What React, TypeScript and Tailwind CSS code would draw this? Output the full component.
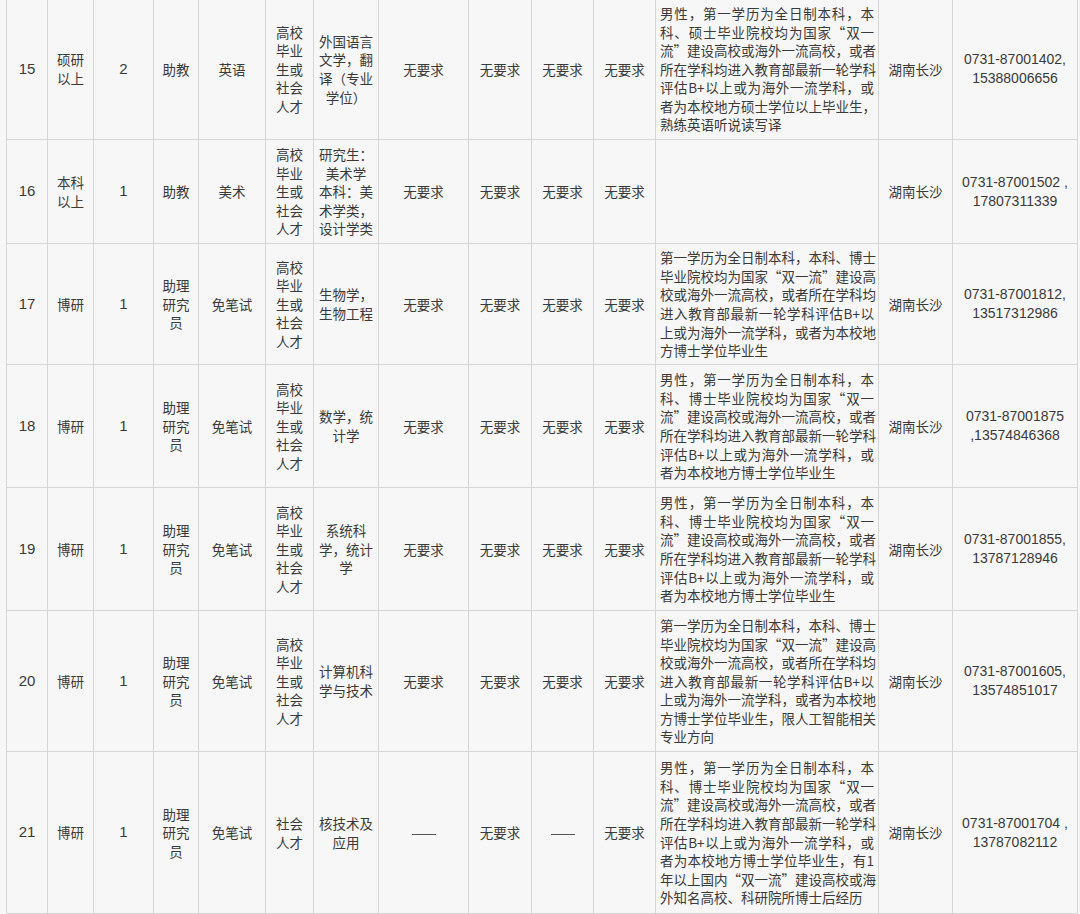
import React from 'react';

const cjk = '[font-family:"Noto_Sans_CJK_SC",sans-serif]';
const latin = '[font-family:"Liberation_Sans","Noto_Sans_CJK_SC",sans-serif]';
const td = 'border border-[#d6d6d6] p-0 text-center align-middle';

type Row = {
  no: string;
  edu: string[];
  count: string;
  post: string[];
  exam: string[];
  source: string[];
  major: string[];
  reqs: string[];
  desc: string[];
  phone: string[];
  h: string;
};

const descMale = [
  '男性，第一学历为全日制本科，本',
  '科、博士毕业院校均为国家“双一',
  '流”建设高校或海外一流高校，或者',
  '所在学科均进入教育部最新一轮学科',
  '评估B+以上或为海外一流学科，或',
  '者为本校地方博士学位毕业生',
];

const descPlain = [
  '第一学历为全日制本科，本科、博士',
  '毕业院校均为国家“双一流”建设高',
  '校或海外一流高校，或者所在学科均',
  '进入教育部最新一轮学科评估B+以',
  '上或为海外一流学科，或者为本校地',
];

const source = ['高校', '毕业', '生或', '社会', '人才'];
const none4 = ['无要求', '无要求', '无要求', '无要求'];
const assistant = ['助理', '研究', '员'];

const rows: Row[] = [
  {
    no: '15',
    edu: ['硕研', '以上'],
    count: '2',
    post: ['助教'],
    exam: ['英语'],
    source,
    major: ['外国语言', '文学，翻', '译（专业', '学位）'],
    reqs: none4,
    desc: [
      '男性，第一学历为全日制本科，本',
      '科、硕士毕业院校均为国家“双一',
      '流”建设高校或海外一流高校，或者',
      '所在学科均进入教育部最新一轮学科',
      '评估B+以上或为海外一流学科，或',
      '者为本校地方硕士学位以上毕业生，',
      '熟练英语听说读写译',
    ],
    phone: ['0731-87001402,', '15388006656'],
    h: 'h-[141px]',
  },
  {
    no: '16',
    edu: ['本科', '以上'],
    count: '1',
    post: ['助教'],
    exam: ['美术'],
    source,
    major: ['研究生：', '美术学', '本科：美', '术学类，', '设计学类'],
    reqs: none4,
    desc: [],
    phone: ['0731-87001502 ,', '17807311339'],
    h: 'h-[104px]',
  },
  {
    no: '17',
    edu: ['博研'],
    count: '1',
    post: assistant,
    exam: ['免笔试'],
    source,
    major: ['生物学，', '生物工程'],
    reqs: none4,
    desc: [...descPlain, '方博士学位毕业生'],
    phone: ['0731-87001812,', '13517312986'],
    h: 'h-[121px]',
  },
  {
    no: '18',
    edu: ['博研'],
    count: '1',
    post: assistant,
    exam: ['免笔试'],
    source,
    major: ['数学，统', '计学'],
    reqs: none4,
    desc: descMale,
    phone: ['0731-87001875', ',13574846368'],
    h: 'h-[123px]',
  },
  {
    no: '19',
    edu: ['博研'],
    count: '1',
    post: assistant,
    exam: ['免笔试'],
    source,
    major: ['系统科', '学，统计', '学'],
    reqs: none4,
    desc: descMale,
    phone: ['0731-87001855,', '13787128946'],
    h: 'h-[123px]',
  },
  {
    no: '20',
    edu: ['博研'],
    count: '1',
    post: assistant,
    exam: ['免笔试'],
    source,
    major: ['计算机科', '学与技术'],
    reqs: none4,
    desc: [...descPlain, '方博士学位毕业生，限人工智能相关', '专业方向'],
    phone: ['0731-87001605,', '13574851017'],
    h: 'h-[141px]',
  },
  {
    no: '21',
    edu: ['博研'],
    count: '1',
    post: assistant,
    exam: ['免笔试'],
    source: ['社会', '人才'],
    major: ['核技术及', '应用'],
    reqs: ['——', '无要求', '——', '无要求'],
    desc: [
      ...descMale.slice(0, 5),
      '者为本校地方博士学位毕业生，有1',
      '年以上国内“双一流”建设高校或海',
      '外知名高校、科研院所博士后经历',
    ],
    phone: ['0731-87001704 ,', '13787082112'],
    h: 'h-[162px]',
  },
];

function Lines({ lines }: { lines: string[] }) {
  return (
    <>
      {lines.map((l, i) => (
        <div key={i} className="whitespace-nowrap">
          {l}
        </div>
      ))}
    </>
  );
}

// 说明列：除最后一行外两端对齐，贴合原表的行宽
function Desc({ lines }: { lines: string[] }) {
  return (
    <div className="px-[4px]">
      {lines.map((l, i) => (
        <div
          key={i}
          className={
            i < lines.length - 1
              ? 'whitespace-nowrap text-justify [text-align-last:justify]'
              : 'whitespace-nowrap text-left'
          }
        >
          {l}
        </div>
      ))}
    </div>
  );
}

const widths = [41, 46, 60, 45, 67, 48, 65, 90, 63, 62, 62, 223, 74, 125];

export default function App() {
  return (
    <div lang="zh-CN" className="min-h-screen overflow-hidden bg-[#f7f7f7] pl-[6px]">
      <table
        className={`-mt-[2px] w-[1071px] table-fixed border-collapse text-[13.5px] leading-[18.6px] text-[#3a3a3a] ${cjk}`}
      >
        <colgroup>
          {widths.map((w, i) => (
            <col key={i} style={{ width: w }} />
          ))}
        </colgroup>
        <tbody>
          {rows.map((r) => (
            <tr key={r.no} className={r.h}>
              <td className={`${td} ${latin} text-[15px]`}>{r.no}</td>
              <td className={td}>
                <Lines lines={r.edu} />
              </td>
              <td className={`${td} ${latin} text-[15px]`}>{r.count}</td>
              <td className={td}>
                <Lines lines={r.post} />
              </td>
              <td className={td}>
                <Lines lines={r.exam} />
              </td>
              <td className={td}>
                <Lines lines={r.source} />
              </td>
              <td className={td}>
                <Lines lines={r.major} />
              </td>
              {r.reqs.map((q, i) => (
                <td key={i} className={td}>
                  {q === '——' ? <span className="inline-block h-px w-[24px] bg-[#555] align-middle" /> : q}
                </td>
              ))}
              <td className={`${td} text-left`}>
                <Desc lines={r.desc} />
              </td>
              <td className={td}>湖南长沙</td>
              <td className={`${td} ${latin} text-[14px]`}>
                <Lines lines={r.phone} />
              </td>
            </tr>
          ))}
        </tbody>
      </table>
    </div>
  );
}
